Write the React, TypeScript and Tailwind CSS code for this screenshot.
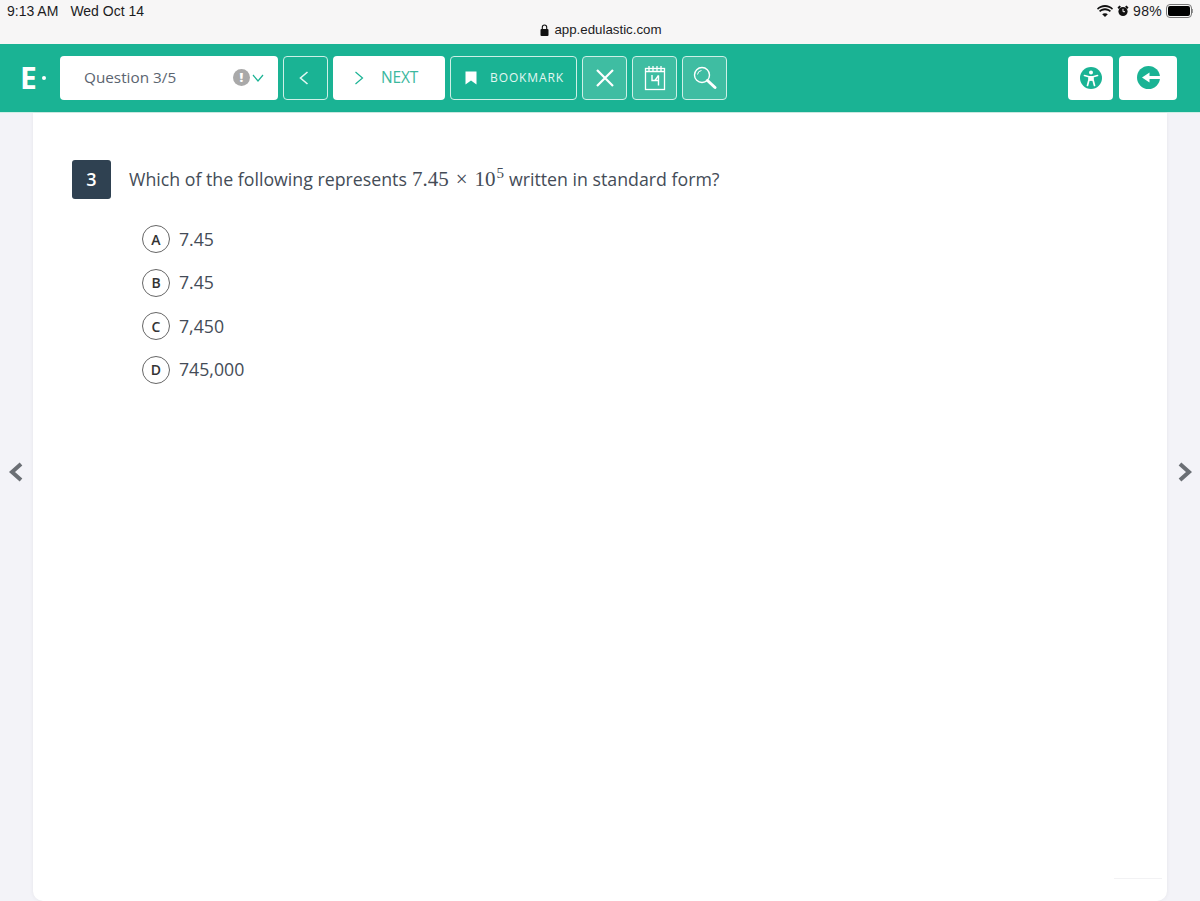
import React from "react";

const options = [
  { letter: "A", text: "7.45" },
  { letter: "B", text: "7.45" },
  { letter: "C", text: "7,450" },
  { letter: "D", text: "745,000" },
];

const StatusBar = () => (
  <div className="relative h-[44px] bg-[#f7f6f6] font-['Liberation_Sans',sans-serif] text-[#1c1c1e]">
    <div className="flex items-start justify-between pl-[7px] pr-[7px] pt-[3px]">
      <div className="flex gap-[12px] text-[14px] leading-[16px]">
        <span>9:13 AM</span>
        <span>Wed Oct 14</span>
      </div>
      <div className="flex items-center gap-[4px] text-[14px] leading-[16px]">
        <svg width="16" height="12" viewBox="0 0 16 12" fill="#111">
          <path d="M8 2C5.2 2 2.8 3 1 4.7L0 3.4C2.1 1.3 4.9 0 8 0s5.9 1.300 8 3.400l-1 1.300C13.200 3 10.800 2 8 2z" />
          <path d="M8 5.200c-1.900 0-3.500.7-4.800 1.800L2 5.700C3.600 4.200 5.700 3.300 8 3.300s4.400.9 6 2.400L12.800 7C11.500 5.900 9.900 5.200 8 5.200z" />
          <path d="M8 8.200c-1.100 0-2.100.4-2.800 1.100L8 12l2.800-2.700C10.100 8.600 9.100 8.200 8 8.200z" />
        </svg>
        <svg width="12" height="12" viewBox="0 0 12 12" fill="#111">
          <circle cx="6" cy="6.500" r="4.600" />
          <path d="M0.500 2.500 2.500 0.500 4 1.800 1.800 4zM11.500 2.500 9.500 0.500 8 1.800 10.200 4z" />
          <path d="M6 3.800V6.700H8" stroke="#f7f6f6" strokeWidth="1" fill="none" />
        </svg>
        <span className="tracking-[0.3px]">98%</span>
        <div className="flex items-center">
          <div className="h-[14px] w-[26px] rounded-[4px] border border-[#777] p-[1px]">
            <div className="h-full w-full rounded-[2px] bg-black" />
          </div>
          <div className="h-[4px] w-[1px] bg-[#999]" />
        </div>
      </div>
    </div>
    <div className="absolute inset-x-0 top-[21px] flex items-center justify-center gap-[5px] pl-[2px] text-[13.300px] leading-[17px]">
      <svg width="9" height="12" viewBox="0 0 9 12" fill="#111">
        <rect x="0.500" y="5" width="8" height="7" rx="1" />
        <path d="M2.300 5.500V3.200a2.200 2.200 0 0 1 4.400 0v2.300" fill="none" stroke="#111" strokeWidth="1.100" />
      </svg>
      <span>app.edulastic.com</span>
    </div>
  </div>
);

const Toolbar = () => (
  <div className="flex h-[69px] items-center border-b border-[#cfeee6] bg-[#1ab394] pb-[1px] font-['Open_Sans',sans-serif]">
    <div className="flex w-[60px] items-center pl-[20px]">
      <span className="text-[30px] font-bold leading-none text-white">E</span>
      <span className="ml-[5px] h-[4px] w-[4px] rounded-full bg-white" />
    </div>
    <div className="flex h-[44px] w-[218px] items-center justify-between rounded-[4px] bg-white pl-[24px] pr-[14px]">
      <span className="text-[15.300px] font-medium text-[#5b6470]">Question 3/5</span>
      <div className="flex items-center gap-[2px]">
        <span className="flex h-[17px] w-[17px] items-center justify-center rounded-full bg-[#a9a9a9] text-[13px] font-extrabold leading-none text-white">!</span>
        <svg width="12" height="8" viewBox="0 0 12 8" fill="none" stroke="#1ab394" strokeWidth="1.200">
          <path d="M1 1l5 6 5-6" />
        </svg>
      </div>
    </div>
    <button className="ml-[5px] flex h-[44px] w-[45px] items-center justify-center rounded-[4px] border border-[#cdf0e7]">
      <svg width="10" height="14" viewBox="0 0 10 14" fill="none" stroke="#e3f7f2" strokeWidth="1.600" className="mr-[3px]">
        <path d="M8.500 1 1.500 7l7 6" />
      </svg>
    </button>
    <button className="ml-[5px] flex h-[44px] w-[112px] items-center rounded-[4px] bg-white pl-[21px]">
      <svg width="10" height="14" viewBox="0 0 10 14" fill="none" stroke="#1ab394" strokeWidth="1.200">
        <path d="M1.500 1l7 6-7 6" />
      </svg>
      <span className="ml-[17px] text-[15.500px] tracking-[-0.2px] text-[#3cb89e]">NEXT</span>
    </button>
    <button className="ml-[5px] flex h-[44px] w-[127px] items-center rounded-[4px] border border-[#cdf0e7] pl-[14px]">
      <svg width="12" height="14" viewBox="0 0 12 14" fill="white">
        <path d="M0.500 0.500h11v13L6 9.500l-5.500 4z" />
      </svg>
      <span className="ml-[13px] text-[12px] font-medium tracking-[0.9px] text-[#e3f7f2]">BOOKMARK</span>
    </button>
    <button className="ml-[5px] flex h-[44px] w-[45px] items-center justify-center rounded-[4px] border border-[#cdf0e7] bg-[#3fbda2]">
      <svg width="20" height="20" viewBox="0 0 20 20" fill="none" stroke="white" strokeWidth="2.200">
        <path d="M2 2l16 16M18 2 2 18" />
      </svg>
    </button>
    <button className="ml-[5px] flex h-[44px] w-[45px] items-center justify-center rounded-[4px] border border-[#cdf0e7] bg-[#3fbda2]">
      <svg width="22" height="26" viewBox="0 0 22 26" fill="none" stroke="white" strokeWidth="1.300">
        <rect x="1.500" y="3.500" width="19" height="21" />
        <path d="M5 1v5M9 1v5M13 1v5M17 1v5M1.500 6.500h19" />
        <path d="M8 10v5.500h6.500M14.500 10.500v10" strokeWidth="1.400" />
        <path d="M11 15.500 14.500 10.500" strokeWidth="1.400" />
      </svg>
    </button>
    <button className="ml-[5px] flex h-[44px] w-[45px] items-center justify-center rounded-[4px] border border-[#cdf0e7] bg-[#3fbda2]">
      <svg width="24" height="24" viewBox="0 0 24 24" fill="none" stroke="white">
        <circle cx="9" cy="9" r="7.500" strokeWidth="1.400" />
        <path d="M4.500 8.500a4.500 4.500 0 0 1 4-4" strokeWidth="1" />
        <path d="M14.500 14.500l7.500 7" strokeWidth="3" strokeLinecap="round" />
      </svg>
    </button>
    <div className="ml-auto mr-[23px] flex items-center gap-[6px]">
      <button className="flex h-[44px] w-[45px] items-center justify-center rounded-[4px] bg-white">
        <svg width="22" height="22" viewBox="0 0 22 22">
          <circle cx="11" cy="11" r="11" fill="#1ab394" />
          <circle cx="11" cy="5.500" r="2" fill="white" />
          <path d="M4.500 8.500 9 9.800v3L7.500 18.500M17.500 8.500 13 9.800v3l1.500 5.700M9 9.800h4M9 12.800h4" fill="none" stroke="white" strokeWidth="1.700" strokeLinecap="round" strokeLinejoin="round" />
          <rect x="9" y="9.500" width="4" height="4" fill="white" />
        </svg>
      </button>
      <button className="flex h-[44px] w-[58px] items-center justify-center rounded-[4px] bg-white">
        <svg width="23" height="23" viewBox="0 0 23 23">
          <circle cx="11.500" cy="11.500" r="11.500" fill="#1ab394" />
          <path d="M23 10H12.500V6.500L5 11.500l7.500 5V13H23z" fill="white" />
        </svg>
      </button>
    </div>
  </div>
);

const SideArrow = ({ direction }: { direction: "left" | "right" }) => (
  <div className="flex w-[33px] items-center justify-center pb-[70px]">
    <svg width="16" height="20" viewBox="0 0 16 20" fill="none" stroke="#6b6f75" strokeWidth="4" className={direction === "right" ? "ml-[2px]" : "mr-[1px]"}>
      {direction === "left" ? <path d="M13 2 4 10l9 8" /> : <path d="M3 2l9 8-9 8" />}
    </svg>
  </div>
);

export default function App() {
  return (
    <div className="flex h-[901px] flex-col overflow-hidden bg-[#f3f3f8]">
      <StatusBar />
      <Toolbar />
      <div className="flex flex-1">
        <SideArrow direction="left" />
        <div className="relative flex-1 rounded-b-[10px] bg-white pl-[39px] pt-[47px] font-['Open_Sans',sans-serif] shadow-[0_0_4px_rgba(0,0,0,0.06)]">
          <div className="flex items-center">
            <div className="flex h-[39px] w-[39px] items-center justify-center rounded-[3px] bg-[#2f4151] text-[18px] font-semibold text-white">3</div>
            <p className="ml-[18px] whitespace-pre text-[17.750px] text-[#444c57]">
              Which of the following represents
              <span className="ml-[5px] font-['Liberation_Serif',serif] text-[21px]">
                7.45<span className="mx-[7px]">×</span>10
                <span className="relative top-[-8px] ml-[1px] text-[15px]">5</span>
              </span>
              <span className="ml-[5px]">written in standard form?</span>
            </p>
          </div>
          <div className="ml-[70px] mt-[26px] flex flex-col gap-[15.500px]">
            {options.map((o) => (
              <div key={o.letter} className="flex items-center">
                <span className="flex h-[28px] w-[28px] items-center justify-center rounded-full border-[1.500px] border-[#666] text-[14px] font-semibold text-[#333]">
                  {o.letter}
                </span>
                <span className="ml-[9px] text-[17.700px] text-[#444c57]">{o.text}</span>
              </div>
            ))}
          </div>
          <div className="absolute bottom-[22px] right-[5px] h-[1px] w-[48px] bg-[#f2f2f4]" />
        </div>
        <SideArrow direction="right" />
      </div>
    </div>
  );
}
